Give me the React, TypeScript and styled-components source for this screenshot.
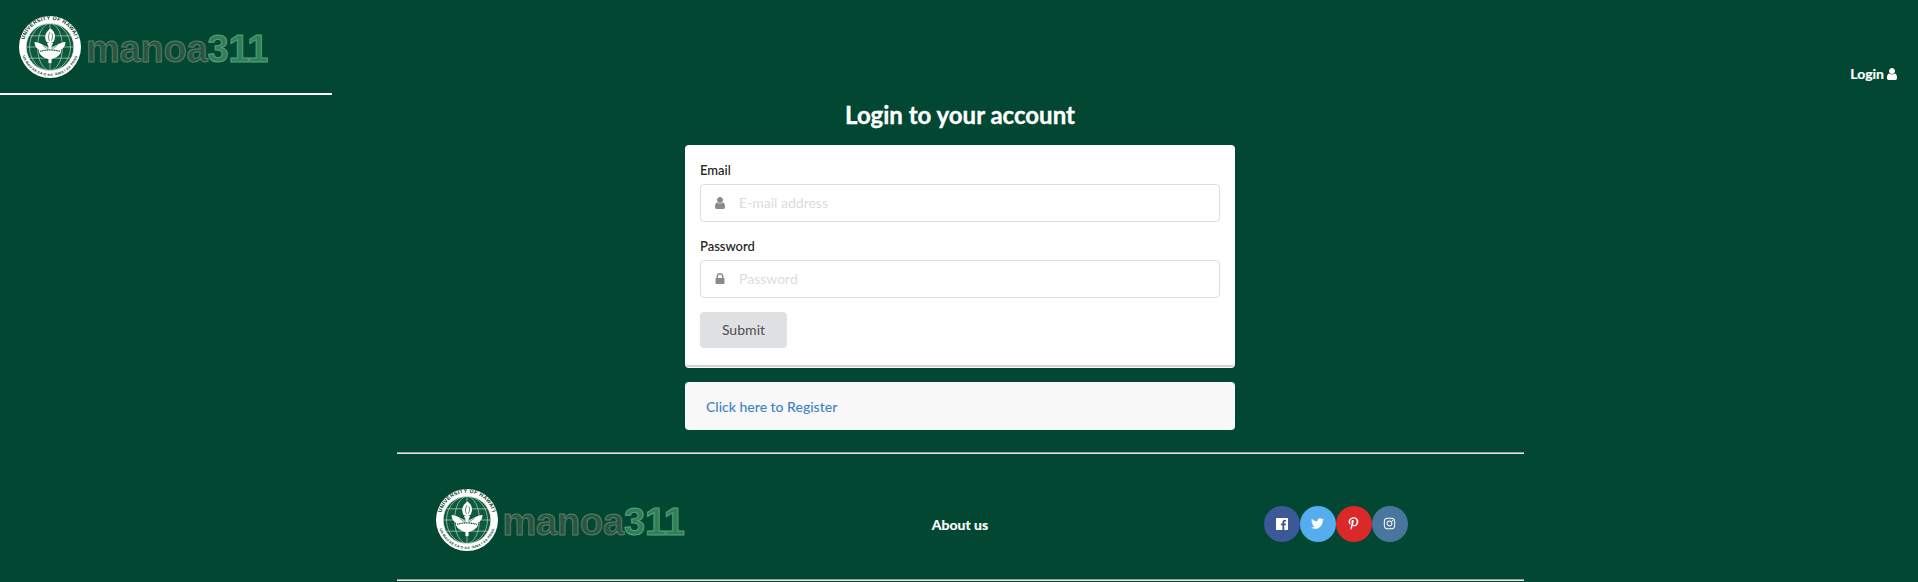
import React from "react";
import styled, { createGlobalStyle } from "styled-components";
import { FaTwitter, FaPinterestP, FaInstagram } from "react-icons/fa";

const Global = createGlobalStyle`
  html, body { margin: 0; padding: 0; background: #024731; }
  body { font-family: Lato, "Liberation Sans", sans-serif; font-size: 14px; line-height: 1.4285em; color: rgba(0,0,0,.87); }
  * { box-sizing: border-box; }
`;

const Page = styled.div`
  width: 1918px;
  height: 582px;
  overflow: hidden;
  background: #024731;
`;

const Header = styled.header`
  height: 95px;
  display: flex;
  justify-content: space-between;
  align-items: flex-start;
`;

const BrandBar = styled.div`
  width: 332px;
  height: 95px;
  padding: 16px 0 0 19px;
  border-bottom: 2px solid #fff;
`;

const LoginLink = styled.a`
  display: flex;
  align-items: center;
  gap: 1px;
  margin: 65px 19px 0 0;
  font-size: 14px;
  font-weight: 700;
  line-height: 18px;
  color: #fff;
  -webkit-text-stroke: 0.2px #fff;
`;

const LogoWrap = styled.div`
  display: flex;
  align-items: center;
  gap: 5px;
  height: 62px;
`;

const Wordmark = styled.span`
  font-family: "Liberation Sans", Arial, sans-serif;
  font-weight: 700;
  font-size: 38px;
  line-height: 62px;
  letter-spacing: -0.2px;
  color: #2b5540;
  -webkit-text-stroke: 1px #587f6b;
  position: relative;
  top: 2px;
`;

const Digits = styled.span`
  color: #2f8058;
  -webkit-text-stroke: 1px #57a07c;
`;

const Main = styled.main`
  display: flex;
  flex-direction: column;
  align-items: center;
  padding-left: 2px;
`;

const Title = styled.h2`
  margin: 4px 0 15px;
  font-size: 24px;
  line-height: 31px;
  font-weight: 700;
  color: #fff;
  -webkit-text-stroke: 0.35px #fff;
`;

const Card = styled.form`
  width: 550px;
  height: 222px;
  padding: 15px;
  background: #fff;
  border-radius: 4px;
  border-bottom: 2px solid #d4d4d5;
  box-shadow: 0 1px 0 #fff;
`;

const Field = styled.div`
  margin-bottom: 14px;
`;

const Label = styled.label`
  display: block;
  margin-bottom: 4px;
  font-size: 13px;
  font-weight: 500;
  line-height: 20px;
  color: rgba(0,0,0,.87);
  -webkit-text-stroke: 0.15px rgba(0,0,0,.87);
`;

const InputBox = styled.div`
  height: 38px;
  display: flex;
  align-items: center;
  padding-left: 12px;
  border: 1px solid rgba(34,36,38,.15);
  border-radius: 4px;
  color: #8a8a8a;
`;

const Input = styled.input`
  flex: 1;
  height: 34px;
  margin-left: 12px;
  padding: 0 0 2px;
  border: 0;
  outline: 0;
  background: transparent;
  font: 400 14px Lato, sans-serif;
  &::placeholder { color: #dcdcdc; opacity: 1; }
`;

const Submit = styled.button`
  width: 87px;
  height: 36px;
  padding: 0 0 2px;
  border: 0;
  border-radius: 4px;
  background: #e0e1e2;
  font: 500 14px Lato, sans-serif;
  color: rgba(0,0,0,.65);
`;

const Message = styled.div`
  width: 550px;
  height: 48px;
  margin-top: 15px;
  padding: 2px 21px 0;
  display: flex;
  align-items: center;
  background: #f8f8f9;
  border-radius: 4px;
  font-size: 14px;
`;

const RegisterLink = styled.a`
  color: #4183c4;
  font-weight: 500;
`;

const Footer = styled.footer`
  width: 1127px;
  height: 129px;
  margin-top: 22px;
  display: grid;
  grid-template-columns: repeat(3, 1fr);
  align-items: center;
  border-top: 1px solid #979d9a;
  border-bottom: 1px solid #e4e6e5;
  box-shadow: inset 0 1px 0 #e4e6e5, inset 0 -1px 0 #979d9a;
`;

const FooterBrand = styled.div`
  padding: 6px 0 0 39px;
`;

const AboutLink = styled.a`
  justify-self: center;
  font-size: 14px;
  font-weight: 700;
  color: #fff;
  -webkit-text-stroke: 0.2px #fff;
  position: relative;
  top: 8px;
`;

const Socials = styled.div`
  justify-self: center;
  display: flex;
  position: relative;
  top: 7px;
`;

const SocialButton = styled.a<{ $bg: string }>`
  width: 36px;
  height: 36px;
  display: flex;
  align-items: center;
  justify-content: center;
  border-radius: 50%;
  background: ${(p) => p.$bg};
  color: #fff;
  > svg { width: 13px; height: 13px; }
  > svg[data-fa4] { width: 14px; height: 14px; }
`;

const Glyph: React.FC<{ d: string }> = ({ d }) => (
  <svg data-fa4 width="14" height="14" viewBox="0 0 1792 1792" fill="currentColor" aria-hidden="true">
    <path d={d} />
  </svg>
);

const USER =
  "M1536 1399q0 109-62.5 187t-150.5 78h-854q-88 0-150.5-78t-62.5-187q0-85 8.5-160.5t31.5-152 58.5-131 94-89 134.5-34.5q131 128 313 128t313-128q76 0 134.5 34.5t94 89 58.5 131 31.5 152 8.5 160.5zm-256-887q0 159-112.5 271.5t-271.5 112.5-271.5-112.5-112.5-271.5 112.5-271.5 271.5-112.5 271.5 112.5 112.5 271.5z";
const LOCK =
  "M640 768h512v-192q0-106-75-181t-181-75-181 75-75 181v192zm832 96v576q0 40-28 68t-68 28h-960q-40 0-68-28t-28-68v-576q0-40 28-68t68-28h32v-192q0-184 132-316t316-132 316 132 132 316v192h32q40 0 68 28t28 68z";
const FACEBOOK =
  "M1579 128q35 0 60 25t25 60v1366q0 35-25 60t-60 25h-391v-595h199l30-232h-229v-148q0-56 23.5-84t91.5-28l122-1v-207q-63-9-178-9-136 0-217.5 80t-81.5 226v171h-200v232h200v595h-735q-35 0-60-25t-25-60v-1366q0-35 25-60t60-25h1366z";

const Seal: React.FC<{ id: string }> = ({ id }) => (
  <svg width="62" height="62" viewBox="0 0 100 100" aria-hidden="true">
    <defs>
      <path id={`${id}-top`} d="M8 55 A42.5 42.5 0 1 1 92 55" />
      <path id={`${id}-bot`} d="M5 62 A46.5 46.5 0 0 0 95 62" />
    </defs>
    <circle cx="50" cy="50" r="50" fill="#fff" />
    <circle cx="50" cy="50" r="38.5" fill="#0d5a3d" stroke="#fff" strokeWidth="1" />
    <text fontFamily="Liberation Sans, sans-serif" fontWeight="700" fontSize="8.6" fill="#063d28" letterSpacing=".55">
      <textPath href={`#${id}-top`} startOffset="50%" textAnchor="middle">UNIVERSITY OF HAWAI'I</textPath>
    </text>
    <text fontFamily="Liberation Sans, sans-serif" fontWeight="700" fontSize="5.6" fill="#063d28" letterSpacing=".4">
      <textPath href={`#${id}-bot`} startOffset="50%" textAnchor="middle">UA MAU KE EA O KA ʻĀINA I KA PONO</textPath>
    </text>
    <g fill="none" stroke="#cfe3d8" strokeWidth="1">
      <ellipse cx="50" cy="50" rx="20" ry="38" />
      <ellipse cx="50" cy="50" rx="33" ry="38" />
      <path d="M12 50H88M17 32H83M17 68H83M50 12V88" />
    </g>
    <path d="M47.5 42H52.5V76H47.5Z" fill="#fff" />
    <path d="M51 20C43 25 40 33 44 41C46 43 54 43 56 41C60 33 58 25 51 20Z" fill="#fff" />
    <path d="M50 26C47 31 47 36 49 40M53 28C55 32 54 37 52 40" stroke="#0d5a3d" strokeWidth="1.1" fill="none" />
    <path d="M45 43H55L53 48H47Z" fill="#fff" />
    <path d="M25 42C33 43 43 47 50 55C57 47 67 43 75 42C75 48 72 52 68 54C69 62 61 68 50 70C39 68 31 62 32 54C28 52 25 48 25 42Z" fill="#fff" />
    <path d="M34 57C43 54 57 54 66 57" stroke="#0d5a3d" strokeWidth="2" strokeDasharray="2 .8" fill="none" />
    <path d="M38 47L47 54M62 47L53 54" stroke="#0d5a3d" strokeWidth="1" fill="none" />
  </svg>
);

const Logo: React.FC<{ id: string }> = ({ id }) => (
  <LogoWrap>
    <Seal id={id} />
    <Wordmark>
      manoa<Digits>311</Digits>
    </Wordmark>
  </LogoWrap>
);

export default function App() {
  return (
    <Page>
      <Global />
      <Header>
        <BrandBar>
          <Logo id="head" />
        </BrandBar>
        <LoginLink>
          Login <Glyph d={USER} />
        </LoginLink>
      </Header>
      <Main>
        <Title>Login to your account</Title>
        <Card onSubmit={(e) => e.preventDefault()}>
          <Field>
            <Label>Email</Label>
            <InputBox>
              <Glyph d={USER} />
              <Input placeholder="E-mail address" />
            </InputBox>
          </Field>
          <Field>
            <Label>Password</Label>
            <InputBox>
              <Glyph d={LOCK} />
              <Input placeholder="Password" type="password" />
            </InputBox>
          </Field>
          <Submit type="submit">Submit</Submit>
        </Card>
        <Message>
          <RegisterLink>Click here to Register</RegisterLink>
        </Message>
        <Footer>
          <FooterBrand>
            <Logo id="foot" />
          </FooterBrand>
          <AboutLink>About us</AboutLink>
          <Socials>
            <SocialButton $bg="#3b5998"><Glyph d={FACEBOOK} /></SocialButton>
            <SocialButton $bg="#55acee"><FaTwitter /></SocialButton>
            <SocialButton $bg="#db2828"><FaPinterestP /></SocialButton>
            <SocialButton $bg="#49769c"><FaInstagram /></SocialButton>
          </Socials>
        </Footer>
      </Main>
    </Page>
  );
}
